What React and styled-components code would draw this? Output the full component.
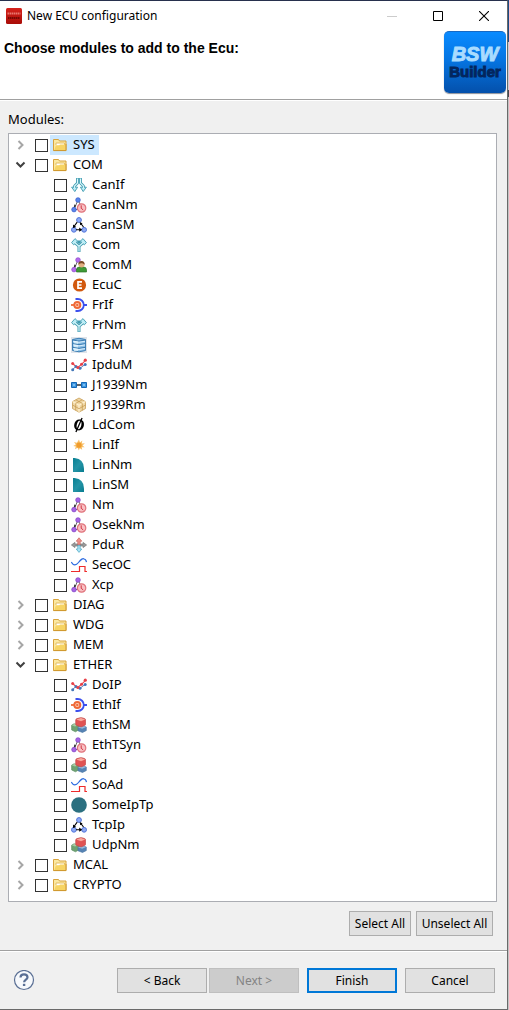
import React, { useState } from "react";
import styled, { createGlobalStyle, css } from "styled-components";

const GlobalStyle = createGlobalStyle`
  *, *::before, *::after { box-sizing: border-box; }
  body {
    margin: 0;
    background: #f0f0f0;
    color: #000;
    font: 13px/20px "Noto Sans", "Open Sans", sans-serif;
  }
  button, input { font: inherit; color: inherit; }
`;

const Screen = styled.div`
  display: flex;
  min-height: 100vh;
`;

const Backdrop = styled.div`
  width: 1px;
  background: linear-gradient(#1c4a86 42px, #c9cdd2 42px, #c9cdd2 90px, #45484e 90px, #45484e 97px, #c4c4c4 97px);
`;

const Dialog = styled.main`
  flex: 1;
  min-width: 0;
  display: flex;
  flex-direction: column;
  background: #f0f0f0;
  border-top: 1px solid #27304d;
  border-right: 1px solid #6a6a6a;
  border-bottom: 1px solid #6a6a6a;
`;

const TitleBar = styled.header`
  display: flex;
  align-items: center;
  height: 30px;
  padding-left: 6px;
  background: #fff;
`;

const AppIcon = styled.svg`
  width: 16px;
  height: 16px;
`;

const WindowTitle = styled.span`
  flex: 1;
  padding-left: 5px;
  font-size: 12px;
`;

const WindowButton = styled.button`
  display: grid;
  place-items: center;
  width: 46px;
  height: 28px;
  padding: 0;
  border: 0;
  background: transparent;
`;

const Banner = styled.section`
  display: flex;
  justify-content: space-between;
  height: 69px;
  padding-left: 4px;
  padding-right: 1px;
  background: #fff;
  border-bottom: 1px solid #a0a0a0;
`;

const Heading = styled.h1`
  margin: 0;
  padding-top: 7px;
  font: bold 14px/20px "Liberation Sans", Arial, sans-serif;
`;

const Logo = styled.div`
  display: flex;
  flex-direction: column;
  align-items: center;
  justify-content: center;
  width: 62px;
  height: 62px;
  padding-bottom: 2px;
  border-radius: 5px;
  border-top: 1px solid #1769c4;
  background: linear-gradient(#0a8bff, #0575e2 45%, #0450ab);
  box-shadow: 0 1px 1px #8a8f99;
  font-family: "Liberation Sans", Arial, sans-serif;
  font-weight: bold;
`;

const LogoTop = styled.span`
  font-size: 20px;
  line-height: 20px;
  font-style: italic;
  color: #a9dcff;
  -webkit-text-stroke: 1px #a9dcff;
`;

const LogoBottom = styled.span`
  font-size: 15px;
  line-height: 16px;
  color: #03265e;
  -webkit-text-stroke: 1px #03265e;
`;

const Content = styled.section`
  flex: 1;
  padding: 8px 10px 14px 8px;
  border-top: 1px solid #fff;
  border-bottom: 1px solid #a0a0a0;
`;

const Caption = styled.h2`
  margin: 0;
  padding-bottom: 4px;
  font-size: 13px;
  font-weight: normal;
  line-height: 20px;
`;

const TreeBox = styled.div`
  padding: 1px 1px 6px;
  border: 1px solid #abadb3;
  background: #fff;
`;

const List = styled.ul`
  margin: 0;
  padding: 0;
  list-style: none;
`;

const Row = styled.div`
  display: flex;
  align-items: center;
  height: 20px;
  padding-left: ${(p) => (p.$child ? 44 : 2)}px;
`;

const Expander = styled.button`
  display: grid;
  place-items: center;
  width: 17px;
  height: 20px;
  margin-right: 6px;
  padding: 0;
  border: 0;
  background: transparent;
`;

const CheckBox = styled.input`
  appearance: none;
  flex: none;
  width: 13px;
  height: 13px;
  margin: 0;
  border: 1px solid #333;
  background: #fff;
  &:checked { background: #0078d7; box-shadow: inset 0 0 0 2px #fff; }
`;

const ItemLabel = styled.label`
  display: flex;
  align-items: center;
  gap: 5px;
  height: 20px;
  margin-left: 2px;
  padding: 0 4px 0 2px;
  background: ${(p) => (p.$selected ? "#cce8ff" : "transparent")};
`;

const ItemName = styled.span`
  height: 20px;
  line-height: 18px;
`;

const ModuleIcon = styled.svg`
  flex: none;
  width: 16px;
  height: 16px;
`;

const buttonStates = {
  normal: css`border: 1px solid #adadad; background: #e1e1e1;`,
  primary: css`border: 2px solid #0078d7; background: #e1e1e1;`,
  disabled: css`border: 1px solid #bfbfbf; background: #ccc; color: #838383;`,
};

const PushButton = styled.button`
  width: ${(p) => p.$width}px;
  height: 25px;
  padding: 0;
  font-size: 12px;
  line-height: 20px;
  white-space: nowrap;
  ${(p) => buttonStates[p.$look || "normal"]}
`;

const Selection = styled.div`
  display: flex;
  justify-content: flex-end;
  gap: 5px;
  padding: 9px 4px 0 0;
`;

const Footer = styled.footer`
  display: flex;
  align-items: center;
  justify-content: space-between;
  height: 58px;
  padding: 0 12px 0 13px;
  border-top: 1px solid #fff;
`;

const HelpButton = styled.button`
  width: 22px;
  height: 22px;
  padding: 0;
  border: 0;
  background: transparent;
  svg { display: block; }
`;

const Actions = styled.div`
  display: flex;
  gap: 8px;
`;

const Steps = styled.div`
  display: flex;
  gap: 2px;
`;

const clock = (
  <g>
    <circle cx="10.6" cy="11" r="4.2" fill="#f8bfc3" stroke="#e0757d" strokeWidth="1.2" />
    <path d="M10.2 8.3v3l2 1.6" fill="none" stroke="#cf3642" />
  </g>
);

const nodes = (fill, edge) => (
  <g>
    <path d="M7 3L3 12.5M7 3l3 6M3 12.5h5" stroke="#555" fill="none" strokeWidth=".9" />
    <path d="M3.5 7.2l-.8 3.4 2.4-1.6z" fill="#222" />
    <g fill={fill} stroke={edge} strokeWidth=".7">
      <circle cx="7" cy="3" r="2.3" />
      <circle cx="3" cy="12.6" r="2.3" />
    </g>
  </g>
);

const fork = (
  <g fill="none" strokeLinejoin="round">
    <path d="M8 15V9.2L3.6 5.3M8 9.2l4.4-3.9M8 3.6v3" stroke="#3f9bb0" strokeWidth="3" />
    <path d="M.6 5.6L4 1.6l3.3 3.2-1.7.3-3 2.7zM15.4 5.6L12 1.6 8.7 4.8l1.7.3 3 2.7z" fill="#b9ecf5" stroke="#3f9bb0" strokeWidth=".9" />
    <path d="M8 14.6V9.2L3.6 5.3M8 9.2l4.4-3.9" stroke="#d9f8fd" strokeWidth="1.2" />
  </g>
);

const ICONS = {
  folder: (
    <g>
      <path d="M1.5 13.5v-11h5l1 1.5H14v9.5z" fill="#fbe8a0" stroke="#d8a33c" />
      <path d="M4 8V6h8.5v2" fill="#fff" stroke="#e4bd62" />
      <path d="M2.3 13L3.8 8.4H7l1-1h5.4V13z" fill="#f7d463" />
      <path d="M1.5 13.6H14V7" fill="none" stroke="#d09a30" />
    </g>
  ),
  canif: (
    <g fill="none" strokeLinejoin="round">
      <path d="M6.5 1v5L3.6 9v2.4M9.5 1v5l2.9 3v2.4" stroke="#3f9bb0" strokeWidth="2.8" />
      <path d="M.6 10.2h6L3.8 14.6zM9.4 10.2h6l-3.2 4.4z" fill="#b9ecf5" stroke="#3f9bb0" strokeWidth=".9" />
      <path d="M6.5 1.4v4.7L3.6 9v2.2M9.5 1.4v4.7l2.9 2.9v2.2" stroke="#d9f8fd" strokeWidth="1.1" />
    </g>
  ),
  bluenm: <g>{nodes("#5b85ec", "#3059c8")}{clock}</g>,
  nm: <g>{nodes("#a765e6", "#7d3fc2")}{clock}</g>,
  sm: (
    <g>
      <g fill="#8fabf5" stroke="#4f73d8" strokeWidth="1">
        <circle cx="8" cy="3" r="2.4" /><circle cx="2.9" cy="12.8" r="2.4" /><circle cx="13.1" cy="12.8" r="2.4" />
      </g>
      <path d="M6.2 5.2L3 9.5M9.5 6l3 4M5 12.8h5" stroke="#000" strokeWidth="1.1" />
      <path d="M2 7.5v3.4l3.2-1zM8.8 4.9l.3 3.3 2.5-1.7zM8.2 10.6v4.2l3-2.1z" />
    </g>
  ),
  com: fork,
  comm: (
    <g>
      {nodes("#b56bec", "#8b46cc")}
      <path d="M5.5 15v-2q0-3 3-3h4q3 0 3 3v2z" fill="#3f9a36" stroke="#2c7426" strokeWidth=".7" />
      <circle cx="10.5" cy="7.6" r="3" fill="#e3b083" />
      <path d="M7.3 7.8Q7.2 4 10.5 4t3.2 3.8Q12 5.8 10.4 6.3 8.6 6 7.3 7.8z" fill="#7b4a27" />
    </g>
  ),
  ecuc: (
    <g>
      <circle cx="8.5" cy="8" r="6.6" fill="#d2590f" />
      <path d="M11 4.8H7v6.4h4M7 8h3.5" fill="none" stroke="#fff" strokeWidth="1.7" />
    </g>
  ),
  iface: (
    <g>
      <path d="M0 8h3" stroke="#ef6937" strokeWidth="1.8" />
      <path d="M4.5 2h2.3a6 6 0 0 1 0 12H4.5M12.6 8H16" fill="none" stroke="#3c50ee" strokeWidth="1.8" />
      <circle cx="6.3" cy="8" r="3" fill="#ffd9c5" stroke="#ef6937" strokeWidth="2" />
      <circle cx="6.3" cy="8" r="1.2" fill="#ef6937" />
    </g>
  ),
  database: (
    <g>
      <rect width="16" height="16" fill="#dfe4ea" />
      <path d="M1.5 2.5v11q6.5 2.6 13 0v-11q-6.5-2.4-13 0z" fill="#8cc0e6" stroke="#3f80b5" />
      <path d="M4 3v11M6 3v11" stroke="#def3fc" strokeWidth="1.6" />
      <path d="M1.5 3q6.5 2 13 0M1.5 6.6q6.5 2 13 0M1.5 10.3q6.5 2 13 0" fill="none" stroke="#3c7cb2" />
      <path d="M2 4.3q6 2 12 0M2 7.9q6 2 12 0M2 11.6q6 2 12 0" fill="none" stroke="#eef8ff" strokeWidth=".8" />
    </g>
  ),
  graph: (
    <g>
      <path d="M1.5 12.5L5 9.5l4 1.8 5.2-4" fill="none" stroke="#5a83bd" />
      <path d="M1.5 6.5l5 4.2 4-3.3 4-4" fill="none" stroke="#ef4b52" strokeWidth="1.2" />
      <g fill="#4477b8"><circle cx="1.7" cy="12.8" r="1.5" /><circle cx="5" cy="9.5" r="1.5" /><circle cx="9" cy="11.3" r="1.5" /><circle cx="14.2" cy="7.5" r="1.5" /></g>
      <g fill="#e84149"><circle cx="1.7" cy="6.5" r="1.5" /><circle cx="6.8" cy="10.6" r="1.5" /><circle cx="10.5" cy="7.2" r="1.5" /><circle cx="14.3" cy="3.2" r="1.6" /></g>
    </g>
  ),
  link: (
    <g>
      <path d="M5 8h6" stroke="#222" strokeWidth="1.4" />
      <path d="M.5 5.5h5v5h-5zM10.5 5.5h5v5h-5z" fill="#3f97e0" stroke="#1568b7" />
      <path d="M2 7h2v2H2zM12 7h2v2h-2z" fill="#7cc0f2" />
    </g>
  ),
  cube: (
    <g stroke="#c39548" strokeWidth=".7">
      <path d="M8 1l6.5 3.6v7L8 15.2l-6.5-3.6v-7z" fill="#efd7a6" />
      <path d="M1.5 4.6L8 8.2l6.5-3.6M8 8.2v7" fill="none" stroke="#fff1cf" strokeWidth="1.2" />
      <path d="M4.8 2.8l6.5 3.6v7M11.2 2.8L4.7 6.4v7M1.5 8l6.5 3.7L14.5 8" fill="none" />
    </g>
  ),
  slashed: (
    <g transform="rotate(14 8 8)" fill="none" stroke="#000">
      <path fill="#000" fillRule="evenodd" stroke="none" d="M8 2.4c3 0 4.9 2.3 4.9 5.4S11 13.4 8 13.4 3.2 11 3.2 7.8 5 2.4 8 2.4zM8 3.6c-1.6 0-2.2 2-2.2 4.3s.6 4.3 2.2 4.3 2.3-2 2.3-4.3S9.600 3.600 8 3.600z" />
      <path d="M9.300 .5L6.700 15.500" strokeWidth="1.300" />
    </g>
  ),
  spark: (
    <g>
      <path d="M8 2.500l1 2.900 2.300-1.800-.5 2.900 3.100-.2-2.400 2.100 2.200 1.900-2.900-.1.400 2.600-2.400-1.600-1 2.400-1.200-2.800-2.700 1.400.9-2.600-2.600-.5 2.600-1.500-1.800-2.500 2.900.7z" fill="#f8c069" />
      <circle cx="8" cy="8.200" r="2.600" fill="#f09c2c" />
    </g>
  ),
  quarter: <path d="M2 1h1.500Q13 2 13 11.500V15H2z" fill="url(#teal)" />,
  router: (
    <g strokeWidth=".7">
      <path d="M.4 8l3.500-2.600V7H7v2H3.900v1.600zM15.600 8l-3.500-2.600V7H9v2h3.100v1.600z" fill="#999" stroke="#777" />
      <path d="M8 .8l2.800 3.400H9.200v3.600H6.800V4.200H5.200z" fill="#f0928b" stroke="#c9615a" />
      <path d="M8 15.400l2.800-3.400H9.200V8.400H6.800V12H5.200z" fill="#a9e2f4" stroke="#4aa6c2" />
    </g>
  ),
  signal: (
    <g fill="none" strokeWidth="1.200">
      <path d="M.3 5Q3.500 10.500 7.500 5.500T13 2q1.800 0 2.500 3" stroke="#2c6be0" />
      <path d="M0 14.500h8.500v-5H14v5h2" stroke="#ee2b2b" />
    </g>
  ),
  cubes: (
    <g strokeWidth=".6" strokeLinejoin="round">
      <path d="M.6 8.200L3 6.800 7.500 8v5L4.500 14.800.7 13z" fill="#6fa272" stroke="#4d8654" />
      <path d="M.7 8.200L4 9.600 7.500 8 4 6.600z" fill="#a6cba4" />
      <path d="M7 10.300l4-1.800 4.300 1.500v3.600L11.500 15.500l-4.500-1.700z" fill="#5683b4" stroke="#41709f" />
      <path d="M7 10.300l4.200 1.500 4.100-1.800L11 8.400z" fill="#96b9dc" />
      <path d="M4.700 3Q4.700 2 6 1.600L9 .8q1-.2 2 0l2.500.7q1 .3 1 1.300v4.600q0 .8-1 1.200L11 9.600q-1 .4-2 0L5.700 8.500q-1-.3-1-1.300z" fill="#e05353" stroke="#bd3c3c" />
      <path d="M5.200 2.600L10 4.300l4.200-1.700L10 1z" fill="#f7a79c" />
    </g>
  ),
  disc: <circle cx="8" cy="8" r="7.800" fill="#2b7080" />,
};

const GROUPS = [
  { name: "SYS", selected: true, modules: [] },
  {
    name: "COM",
    open: true,
    modules: [
      ["CanIf", "canif"], ["CanNm", "bluenm"], ["CanSM", "sm"], ["Com", "com"], ["ComM", "comm"],
      ["EcuC", "ecuc"], ["FrIf", "iface"], ["FrNm", "com"], ["FrSM", "database"], ["IpduM", "graph"],
      ["J1939Nm", "link"], ["J1939Rm", "cube"], ["LdCom", "slashed"], ["LinIf", "spark"],
      ["LinNm", "quarter"], ["LinSM", "quarter"], ["Nm", "nm"], ["OsekNm", "nm"], ["PduR", "router"],
      ["SecOC", "signal"], ["Xcp", "nm"],
    ],
  },
  { name: "DIAG", modules: [] },
  { name: "WDG", modules: [] },
  { name: "MEM", modules: [] },
  {
    name: "ETHER",
    open: true,
    modules: [
      ["DoIP", "graph"], ["EthIf", "iface"], ["EthSM", "cubes"], ["EthTSyn", "nm"], ["Sd", "cubes"],
      ["SoAd", "signal"], ["SomeIpTp", "disc"], ["TcpIp", "sm"], ["UdpNm", "cubes"],
    ],
  },
  { name: "MCAL", modules: [] },
  { name: "CRYPTO", modules: [] },
];

function TreeItem({ name, icon, child, selected, checked, onCheck, expander }) {
  const id = `module-${name}`;
  return (
    <Row $child={child}>
      {expander}
      <CheckBox type="checkbox" id={id} checked={checked} onChange={() => onCheck(name)} />
      <ItemLabel htmlFor={id} $selected={selected}>
        <ModuleIcon viewBox="0 0 16 16" aria-hidden="true">{ICONS[icon]}</ModuleIcon>
        <ItemName>{name}</ItemName>
      </ItemLabel>
    </Row>
  );
}

export default function App() {
  const [open, setOpen] = useState(() => GROUPS.filter((g) => g.open).map((g) => g.name));
  const [checked, setChecked] = useState([]);
  const flip = (list, name) => (list.includes(name) ? list.filter((n) => n !== name) : [...list, name]);
  const onCheck = (name) => setChecked((list) => flip(list, name));
  const selectAll = () => setChecked(GROUPS.flatMap((g) => [g.name, ...g.modules.map(([n]) => n)]));

  return (
    <Screen>
      <GlobalStyle />
      <Dialog>
        <TitleBar>
          <AppIcon viewBox="0 0 16 16" aria-hidden="true">
            <defs>
              <linearGradient id="red" x2="0" y2="1"><stop stopColor="#d5221b" /><stop offset="1" stopColor="#a90d08" /></linearGradient>
              <linearGradient id="teal" x2="1" y2="1"><stop stopColor="#087f92" /><stop offset=".5" stopColor="#2594a6" /><stop offset="1" stopColor="#087d90" /></linearGradient>
            </defs>
            <rect width="16" height="16" rx="1.500" fill="url(#red)" />
            <path d="M1.500 5.500h13" stroke="#e8776f" strokeWidth="2" strokeDasharray="1.500 .5" />
            <path d="M2 10h12" stroke="#740803" strokeWidth="2" strokeDasharray="1.500 .5" />
          </AppIcon>
          <WindowTitle>New ECU configuration</WindowTitle>
          <WindowButton aria-label="Minimize" disabled>
            <svg width="10" height="10"><path d="M0 5.500h10" stroke="#ccc" /></svg>
          </WindowButton>
          <WindowButton aria-label="Maximize">
            <svg width="10" height="10"><path d="M.5.500h9v9h-9z" fill="none" stroke="#000" /></svg>
          </WindowButton>
          <WindowButton aria-label="Close">
            <svg width="10" height="10"><path d="M0 0l10 10M10 0L0 10" stroke="#000" strokeWidth="1.100" /></svg>
          </WindowButton>
        </TitleBar>
        <Banner>
          <Heading>Choose modules to add to the Ecu:</Heading>
          <Logo>
            <LogoTop>BSW</LogoTop>
            <LogoBottom>Builder</LogoBottom>
          </Logo>
        </Banner>
        <Content>
          <Caption>Modules:</Caption>
          <TreeBox>
            <List>
              {GROUPS.map((group) => {
                const isOpen = open.includes(group.name);
                return (
                  <li key={group.name}>
                    <TreeItem
                      name={group.name}
                      icon="folder"
                      selected={group.selected}
                      checked={checked.includes(group.name)}
                      onCheck={onCheck}
                      expander={
                        <Expander
                          aria-label={`Toggle ${group.name}`}
                          aria-expanded={isOpen}
                          onClick={() => setOpen((list) => flip(list, group.name))}
                        >
                          <svg width="11" height="10" fill="none">
                            {isOpen
                              ? <path d="M1.500 2.500l4 4 4-4" stroke="#404040" strokeWidth="2" />
                              : <path d="M3.500 1l4 4-4 4" stroke="#a6a6a6" strokeWidth="2" />}
                          </svg>
                        </Expander>
                      }
                    />
                    {isOpen && (
                      <List>
                        {group.modules.map(([name, icon]) => (
                          <li key={name}>
                            <TreeItem child name={name} icon={icon} checked={checked.includes(name)} onCheck={onCheck} />
                          </li>
                        ))}
                      </List>
                    )}
                  </li>
                );
              })}
            </List>
          </TreeBox>
          <Selection>
            <PushButton $width={62} onClick={selectAll}>Select All</PushButton>
            <PushButton $width={77} onClick={() => setChecked([])}>Unselect All</PushButton>
          </Selection>
        </Content>
        <Footer>
          <HelpButton aria-label="Help">
            <svg width="22" height="22" fill="none" stroke="#5a6f94">
              <circle cx="11" cy="10" r="9.500" fill="#f7f9fc" strokeWidth="1.200" />
              <path d="M7.500 7.500Q7.600 4.400 11 4.400t3.500 2.800c0 2.400-3.400 2.300-3.400 5" strokeWidth="2.200" />
              <path d="M11.100 13.800v2.200" strokeWidth="2.400" />
            </svg>
          </HelpButton>
          <Actions>
            <Steps>
              <PushButton $width={90}>&lt; Back</PushButton>
              <PushButton $width={90} $look="disabled" disabled>Next &gt;</PushButton>
            </Steps>
            <PushButton $width={90} $look="primary">Finish</PushButton>
            <PushButton $width={90}>Cancel</PushButton>
          </Actions>
        </Footer>
      </Dialog>
      <Backdrop />
    </Screen>
  );
}
